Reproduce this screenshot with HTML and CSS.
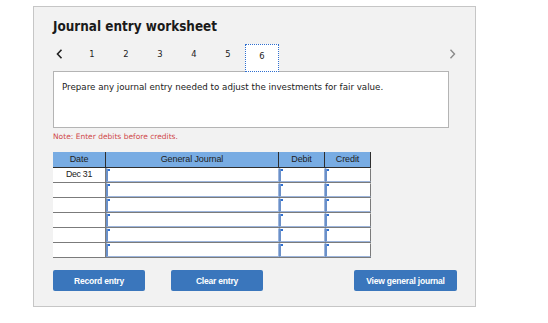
FILE: index.html
```html
<!DOCTYPE html>
<html>
<head>
<meta charset="utf-8">
<link rel="stylesheet" href="styles.css">
</head>
<body>
<div class="panel">
  <h1 class="title">Journal entry worksheet</h1>
  <div class="tabs">
    <span class="arrow prev"><svg width="7" height="10" viewBox="0 0 7 10"><path d="M5.5 0.8 L1.5 5 L5.5 9.2" fill="none" stroke="#222" stroke-width="1.6"/></svg></span>
    <span class="tab">1</span>
    <span class="tab">2</span>
    <span class="tab">3</span>
    <span class="tab">4</span>
    <span class="tab">5</span>
    <span class="tab active">6</span>
    <span class="spacer"></span>
    <span class="arrow next"><svg width="7" height="10" viewBox="0 0 7 10"><path d="M1.5 0.8 L5.5 5 L1.5 9.2" fill="none" stroke="#8a8a8a" stroke-width="1.4"/></svg></span>
  </div>
  <div class="prompt">Prepare any journal entry needed to adjust the investments for fair value.</div>
  <div class="note">Note: Enter debits before credits.</div>
  <div class="journal">
    <div class="hrow">
      <div class="hc c-date">Date</div>
      <div class="hc c-gj">General Journal</div>
      <div class="hc c-dr">Debit</div>
      <div class="hc c-cr last">Credit</div>
    </div>
    <div class="row"><div class="dc c-date">Dec 31</div><div class="ic c-gj"></div><div class="ic c-dr"></div><div class="ic c-cr"></div></div>
    <div class="row"><div class="dc c-date"></div><div class="ic c-gj"></div><div class="ic c-dr"></div><div class="ic c-cr"></div></div>
    <div class="row"><div class="dc c-date"></div><div class="ic c-gj"></div><div class="ic c-dr"></div><div class="ic c-cr"></div></div>
    <div class="row"><div class="dc c-date"></div><div class="ic c-gj"></div><div class="ic c-dr"></div><div class="ic c-cr"></div></div>
    <div class="row"><div class="dc c-date"></div><div class="ic c-gj"></div><div class="ic c-dr"></div><div class="ic c-cr"></div></div>
    <div class="row"><div class="dc c-date"></div><div class="ic c-gj"></div><div class="ic c-dr"></div><div class="ic c-cr"></div></div>
  </div>
  <div class="buttons">
    <button class="btn b-record">Record entry</button>
    <button class="btn b-clear">Clear entry</button>
    <button class="btn b-view">View general journal</button>
  </div>
</div>
</body>
</html>
```

FILE: styles.css
```css
html, body { margin: 0; padding: 0; background: #fff; }
body { width: 548px; height: 323px; overflow: hidden; }

.panel {
  box-sizing: border-box;
  margin: 6px 0 0 33px;
  width: 443px;
  height: 301px;
  background: #f2f2f2;
  border: 1px solid #c6c6c6;
  padding: 0 0 0 19px;
  display: flex;
  flex-direction: column;
  font-family: "DejaVu Sans", sans-serif;
}

.title {
  margin: 12px 0 0 0;
  font-family: "DejaVu Sans Condensed", "DejaVu Sans", sans-serif;
  font-size: 13.4px;
  line-height: 16px;
  font-weight: bold;
  color: #1a1a1a;
}

.tabs {
  margin-top: 9px;
  height: 28px;
  display: flex;
  align-items: flex-start;
  width: 404px;
  font-size: 8.4px;
  color: #222;
}
.arrow { display: flex; align-items: center; height: 20px; }
.arrow.prev { width: 22px; padding-left: 3px; box-sizing: border-box; }
.arrow.next { width: 8px; }
.spacer { flex: 1; }
.tab {
  width: 34px;
  height: 28px;
  box-sizing: border-box;
  text-align: center;
  line-height: 20px;
}
.tab.active {
  background: #fff;
  border: 1px dotted #2f6fcf;
  line-height: 22px;
  position: relative;
  z-index: 1;
}

.prompt {
  box-sizing: border-box;
  width: 396px;
  height: 57px;
  margin-top: -1px;
  background: #fff;
  border: 1px solid #b4b4b4;
  padding: 9px 0 0 8px;
  font-size: 8.7px;
  line-height: 12px;
  color: #1a1a1a;
}

.note {
  margin-top: 4px;
  font-size: 7.5px;
  line-height: 10px;
  color: #d0494a;
}

.journal {
  margin-top: 10px;
  width: 318px;
  font-family: "Liberation Sans", Arial, sans-serif;
}
.hrow, .row { display: flex; }
.hrow {
  height: 16px;
  background: #78ace3;
  border-bottom: 1px solid #2e2e2e;
  box-sizing: border-box;
}
.hc {
  box-sizing: border-box;
  font-size: 9px;
  line-height: 14px;
  text-align: center;
  color: #222;
  border-right: 1px solid #2e2e2e;
  letter-spacing: -0.1px;
}
.c-date { width: 53px; }
.c-gj { width: 173px; }
.c-dr { width: 46px; }
.c-cr { width: 46px; }

.row {
  height: 15px;
  box-sizing: border-box;
  border-bottom: 1px solid #7b7b7b;
}
.dc {
  box-sizing: border-box;
  background: #fff;
  border-right: 1px solid #7b7b7b;
  font-size: 8.8px;
  line-height: 13px;
  text-align: center;
  color: #222;
  letter-spacing: -0.3px;
}
.ic {
  box-sizing: border-box;
  background: #fff;
  border-top: 1px solid #fff;
  border-bottom: 1px solid #9db5dc;
  border-right: 1px solid #9db5dc;
  border-left: 2px solid #6a90c9;
  position: relative;
}
.ic::before {
  content: "";
  position: absolute;
  left: 0;
  top: 0;
  width: 2px;
  height: 2px;
  background: #2f6fd0;
}
.c-cr.ic { border-right: 1px solid #7b7b7b; }

.buttons {
  margin-top: 12px;
  width: 404px;
  display: flex;
}
.btn {
  height: 21px;
  border: none;
  border-radius: 2px;
  background: #3a76bc;
  color: #fff;
  font-family: "Liberation Sans", Arial, sans-serif;
  font-weight: bold;
  font-size: 8.5px;
  letter-spacing: -0.2px;
  padding: 0;
  text-align: center;
}
.b-record { width: 92px; }
.b-clear { width: 92px; margin-left: 26px; }
.b-view { width: 103px; margin-left: auto; }
```
